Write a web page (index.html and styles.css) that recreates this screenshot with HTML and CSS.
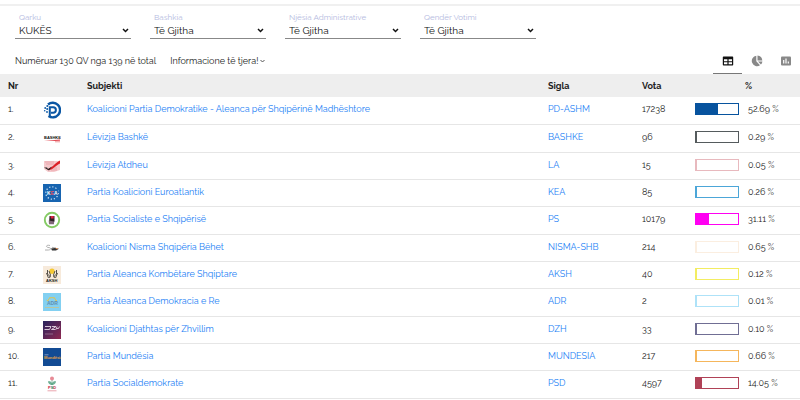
FILE: index.html
```html
<!DOCTYPE html>
<html lang="sq">
<head>
    <meta charset="UTF-8">
    <meta name="viewport" content="width=device-width, initial-scale=1.0">
    <title>Rezultatet - Kukës</title>
    <link rel="stylesheet" href="styles.css">
</head>
<body>
    <form class="filters">
        <div class="field">
            <label for="qarku">Qarku</label>
            <select id="qarku"><option>KUKËS</option></select>
        </div>
        <div class="field">
            <label for="bashkia">Bashkia</label>
            <select id="bashkia"><option>Të Gjitha</option></select>
        </div>
        <div class="field">
            <label for="njesia">Njësia Administrative</label>
            <select id="njesia"><option>Të Gjitha</option></select>
        </div>
        <div class="field">
            <label for="qendra">Qendër Votimi</label>
            <select id="qendra"><option>Të Gjitha</option></select>
        </div>
    </form>

    <div class="toolbar">
        <span class="counted">Numëruar 130 QV nga 139 në total</span>
        <button type="button" class="more">Informacione të tjera!
            <svg width="5" height="4" viewBox="0 0 5 4"><path d="M.5 1l2 2 2-2" fill="none" stroke="#555"/></svg>
        </button>
        <div class="tabs">
            <button type="button" class="tab active" aria-label="Tabela">
                <svg width="12" height="12" viewBox="0 0 12 12"><path fill="#111" fill-rule="evenodd" d="M1.500 1.500h9a.7.7 0 0 1 .7.7v7.600a.7.7 0 0 1-.7.7h-9a.7.7 0 0 1-.7-.7V2.200a.7.700 0 0 1 .7-.7zM2 4.200v2h3.400v-2zm4.600 0v2H10v-2zM2 7.300v2h3.400v-2zm4.600 0v2H10v-2z"/></svg>
            </button>
            <button type="button" class="tab" aria-label="Grafiku rrethor">
                <svg width="12" height="12" viewBox="0 0 12 12"><g fill="#888"><path d="M5.300.8v5.400l3.700 4A5.200 5.200 0 1 1 5.300.8z"/><path d="M6.500.5a5.200 5.200 0 0 1 4.800 4.900H6.500z"/><path d="M7 6.400h4.400a5 5 0 0 1-1.500 3.200z"/></g></svg>
            </button>
            <button type="button" class="tab" aria-label="Grafiku me shtylla">
                <svg width="12" height="12" viewBox="0 0 12 12"><rect x="1" y="1.500" width="10" height="9" rx="1" fill="#888"/><path d="M3.700 5v3.500M6 3.500v5M8.300 6.500v2" stroke="#fff" stroke-width="1.200"/></svg>
            </button>
        </div>
    </div>

    <table class="results">
        <colgroup>
            <col class="col-nr"><col class="col-logo"><col><col class="col-sigla"><col class="col-vota"><col class="col-bar"><col class="col-pct">
        </colgroup>
        <thead>
            <tr><th>Nr</th><th></th><th>Subjekti</th><th>Sigla</th><th>Vota</th><th></th><th class="pct">%</th></tr>
        </thead>
        <tbody>
            <tr>
                <td>1.</td>
                <td><svg class="logo" viewBox="0 0 18 18"><path d="M5 3.500A7.300 7.300 0 1 1 5.500 15" fill="none" stroke="#0b57a4" stroke-width="2.400"/><path d="M6.800 15.500V6.300h3.400a2.700 2.700 0 0 1 0 5.400H8" fill="none" stroke="#0b57a4" stroke-width="2"/><g fill="#0b57a4"><circle cx="4.300" cy="5" r="1"/><circle cx="2.200" cy="7" r=".9"/><circle cx="4.200" cy="8" r="1"/><circle cx="1.700" cy="9.700" r=".8"/><circle cx="4" cy="11" r=".9"/></g></svg></td>
                <td><a href="#">Koalicioni Partia Demokratike - Aleanca për Shqipërinë Madhështore</a></td>
                <td><a href="#">PD-ASHM</a></td><td>17238</td>
                <td><div class="bar pd"><div class="fill" style="width:52.69%"></div></div></td><td>52.69 %</td>
            </tr>
            <tr>
                <td>2.</td>
                <td><svg class="logo" viewBox="0 0 18 18"><text class="narrow" x="1" y="10" font-size="4" fill="#111">BASHKË</text><path d="M1 11h10l6-.5v1.300l-5 .2z" fill="#e34b55"/><path d="M12 12.800h5" stroke="#e99"/></svg></td>
                <td><a href="#">Lëvizja Bashkë</a></td>
                <td><a href="#">BASHKE</a></td><td>96</td>
                <td><div class="bar bashke"><div class="fill" style="width:0.29%"></div></div></td><td>0.29 %</td>
            </tr>
            <tr>
                <td>3.</td>
                <td><svg class="logo" viewBox="0 0 18 18"><path d="M1 4h16v9l-6 2H5L1 12z" fill="#f5c9cc"/><path d="M2 5h9M3 7h8M8 13h6M9 11h5" stroke="#e6979d" stroke-width=".7"/><path d="M4 12.500C9 11 12 6 17 3.500v3C13 8 10 13 6 13z" fill="#dc2027"/><path d="M1 10.500h3l1 1.500 4-2.500-3 4z" fill="#222"/></svg></td>
                <td><a href="#">Lëvizja Atdheu</a></td>
                <td><a href="#">LA</a></td><td>15</td>
                <td><div class="bar la"><div class="fill" style="width:0.05%"></div></div></td><td>0.05 %</td>
            </tr>
            <tr>
                <td>4.</td>
                <td><svg class="logo" viewBox="0 0 18 18"><path d="M0 0h18v18H0z" fill="#1764b0"/><circle cx="9" cy="9" r="6.200" fill="none" stroke="#dbe9f6" stroke-width="1.200" stroke-dasharray="1.200 2"/><path d="M4 6h11v6H4z" fill="#1764b0"/><text class="narrow" x="4" y="11" font-size="5" fill="#fff">K<tspan fill="#ee5360">E</tspan>A</text></svg></td>
                <td><a href="#">Partia Koalicioni Euroatlantik</a></td>
                <td><a href="#">KEA</a></td><td>85</td>
                <td><div class="bar kea"><div class="fill" style="width:0.26%"></div></div></td><td>0.26 %</td>
            </tr>
            <tr>
                <td>5.</td>
                <td><svg class="logo" viewBox="0 0 18 18"><circle cx="9" cy="9" r="7.200" fill="#fff" stroke="#85cb65" stroke-width="1.900"/><path d="M6.500 5h5v5l-1 3H6z" fill="#2c2023"/><path d="M7.500 5h3.200v2.500H8z" fill="#d92342"/><path d="M5.700 9.500l5.300 1v2.800H6z" fill="#806879"/></svg></td>
                <td><a href="#">Partia Socialiste e Shqipërisë</a></td>
                <td><a href="#">PS</a></td><td>10179</td>
                <td><div class="bar ps"><div class="fill" style="width:31.11%"></div></div></td><td>31.11 %</td>
            </tr>
            <tr>
                <td>6.</td>
                <td><svg class="logo" viewBox="0 0 18 18"><path d="M7 6.500c-3-1-5 1-2 2 3 0 4 2 .5 2.500H2M9 8.300l4 .8" fill="none" stroke="#9b9b9b" stroke-width=".8"/><path d="M8 9.500l4-.5 4 .8-3 1.700H9z" fill="#333"/><path d="M12 8.800l3 .5-1 1.200z" fill="#e99157"/></svg></td>
                <td><a href="#">Koalicioni Nisma Shqipëria Bëhet</a></td>
                <td><a href="#">NISMA-SHB</a></td><td>214</td>
                <td><div class="bar nisma"><div class="fill" style="width:0.65%"></div></div></td><td>0.65 %</td>
            </tr>
            <tr>
                <td>7.</td>
                <td><svg class="logo" viewBox="0 0 18 18"><path d="M0 0h18v18H0z" fill="#f7eadb"/><circle cx="9" cy="5.200" r="2.700" fill="#f6c934"/><path d="M4.500 4v4l3 3M6 5l1.500 4-1 3M13.500 4v4l-3 3M12 5l-1.500 4 1 3M3.500 7l2 5M14.500 7l-2 5" fill="none" stroke="#555047"/><text class="narrow" x="3" y="16" font-size="4" fill="#222">AKSH</text></svg></td>
                <td><a href="#">Partia Aleanca Kombëtare Shqiptare</a></td>
                <td><a href="#">AKSH</a></td><td>40</td>
                <td><div class="bar aksh"><div class="fill" style="width:0.12%"></div></div></td><td>0.12 %</td>
            </tr>
            <tr>
                <td>8.</td>
                <td><svg class="logo" viewBox="0 0 18 18"><path d="M0 0h18v18H0z" fill="#83d0f1"/><path d="M5 8a4 3.500 0 0 1 8 0M3.500 7l1.500 1M7 4v1M11 4v1M14 7l-1 1" fill="none" stroke="#d9c35b"/><text class="narrow" x="4" y="12" font-size="5" fill="#618caf">ADR</text><path d="M2 14.500h14" stroke="#c7c28d" stroke-width=".8"/></svg></td>
                <td><a href="#">Partia Aleanca Demokracia e Re</a></td>
                <td><a href="#">ADR</a></td><td>2</td>
                <td><div class="bar adr"><div class="fill" style="width:0.01%"></div></div></td><td>0.01 %</td>
            </tr>
            <tr>
                <td>9.</td>
                <td><svg class="logo" viewBox="0 0 18 18"><defs><linearGradient id="dzh" x2="1" y2="1"><stop stop-color="#29245d"/><stop offset="1" stop-color="#8f2951"/></linearGradient></defs><path d="M0 0h18v18H0z" fill="url(#dzh)"/><path d="M2 5.500h6L6.500 8.500H1.500M9 5.500h4L8.500 8.500h4M14 5.500l-1 3M16.500 5.500l-1 2h-2" fill="none" stroke="#e5d9e5" stroke-width=".9"/><path d="M2 13h8" stroke="#9c7795" stroke-width=".8"/></svg></td>
                <td><a href="#">Koalicioni Djathtas për Zhvillim</a></td>
                <td><a href="#">DZH</a></td><td>33</td>
                <td><div class="bar dzh"><div class="fill" style="width:0.10%"></div></div></td><td>0.10 %</td>
            </tr>
            <tr>
                <td>10.</td>
                <td><svg class="logo" viewBox="0 0 18 18"><path d="M0 0h18v18H0z" fill="#124b94"/><path d="M1.500 6.800h4" stroke="#a8bdd8" stroke-width=".7"/><text class="narrow" x="1" y="11" font-size="4" fill="#e6a13f">Mundësia</text></svg></td>
                <td><a href="#">Partia Mundësia</a></td>
                <td><a href="#">MUNDESIA</a></td><td>217</td>
                <td><div class="bar mundesia"><div class="fill" style="width:0.66%"></div></div></td><td>0.66 %</td>
            </tr>
            <tr>
                <td>11.</td>
                <td><svg class="logo" viewBox="0 0 18 18"><circle cx="9" cy="3.500" r="2" fill="#e78b96"/><path d="M9 5v5M9 9.500C5.500 9.500 5.500 7 5.500 6.500 8 6.500 9 8 9 9.500zM9 9.500c3.500 0 3.500-2.500 3.500-3C10 6.500 9 8 9 9.500z" fill="#76b69a" stroke="#4b9b7a" stroke-width=".6"/><text class="narrow" x="5" y="14" font-size="4" fill="#c9243d">P<tspan fill="#268160">S</tspan>D</text><path d="M4.500 15.800h9" stroke="#eaa6ae"/></svg></td>
                <td><a href="#">Partia Socialdemokrate</a></td>
                <td><a href="#">PSD</a></td><td>4597</td>
                <td><div class="bar psd"><div class="fill" style="width:14.05%"></div></div></td><td>14.05 %</td>
            </tr>
        </tbody>
    </table>
</body>
</html>
```
FILE: styles.css
```css
body {
    margin: 0;
    padding-top: 4px;
    background-color: #fff;
    color: #222;
    font-family: Raleway, Lato, sans-serif;
    font-size: 9px;
    line-height: 12px;
}

button, select {
    font-family: inherit;
    color: inherit;
    background: none;
    border: 0;
    margin: 0;
    padding: 0;
}

a {
    color: #1a80f5;
    text-decoration: none;
}

.filters {
    display: flex;
    gap: 19px;
    padding: 6px 15px 0;
    border-top: 2px solid #f0f0f0;
}

.field {
    display: flex;
    flex-direction: column;
    width: 116px;
}

.field label {
    padding-left: 4px;
    font-size: 8px;
    line-height: 10px;
    color: #b3b9e0;
}

.field select {
    appearance: none;
    height: 17px;
    padding: 0 4px;
    border-bottom: 1px solid #888;
    font-size: 10px;
    color: #111;
    background: url("data:image/svg+xml,%3Csvg xmlns='http://www.w3.org/2000/svg' width='7' height='5'%3E%3Cpath d='M1 1l2.500 2.500L6 1' fill='none' stroke='%23111' stroke-width='1.500'/%3E%3C/svg%3E") no-repeat right 2px center;
}

.toolbar {
    display: flex;
    align-items: flex-end;
    height: 35px;
    padding-left: 15px;
}

.counted, .more {
    padding-bottom: 7px;
}

.more {
    display: flex;
    align-items: center;
    gap: 2px;
    margin-left: 14px;
    font-size: 9px;
    line-height: 12px;
}

.tabs {
    display: flex;
    margin-left: auto;
}

.tab {
    display: flex;
    align-items: center;
    justify-content: center;
    width: 29px;
    height: 26px;
    box-sizing: border-box;
    border-bottom: 1px solid transparent;
}

.active {
    border-bottom-color: #777;
}

.results {
    width: 100%;
    table-layout: fixed;
    border-collapse: collapse;
}

.col-nr { width: 35px; }
.col-logo { width: 44px; }
.col-sigla { width: 94px; }
.col-vota { width: 53px; }
.col-bar { width: 53px; }
.col-pct { width: 60px; }

.results th {
    height: 23px;
    padding: 0 0 0 8px;
    background-color: #eee;
    color: #222;
    text-align: left;
}

.results .pct {
    padding-left: 5px;
}

.results td {
    box-sizing: border-box;
    height: 27px;
    padding: 0 0 2px 8px;
    border-bottom: 1px solid #e6e6e6;
}

.results tr:nth-child(3n+2) td {
    height: 28px;
}

.logo {
    display: block;
    width: 18px;
    height: 18px;
    margin-top: 2px;
}

.narrow {
    font-family: "Liberation Sans Narrow", "Liberation Sans", sans-serif;
    font-weight: bold;
}

.bar {
    width: 44px;
    height: 12px;
    box-sizing: border-box;
    border: 1px solid;
}

.fill {
    min-width: 1px;
    height: 100%;
    background-color: currentColor;
}

.pd { color: #07539e; }
.bashke { color: #555b5d; }
.la { color: #e8b9be; }
.kea { color: #4ca6d8; }
.ps { color: #ff00f2; }
.nisma { color: #fbeee0; }
.aksh { color: #f3ed62; }
.adr { color: #aee2f8; }
.dzh { color: #706e94; }
.mundesia { color: #f5b65c; }
.psd { color: #b04257; }
```
